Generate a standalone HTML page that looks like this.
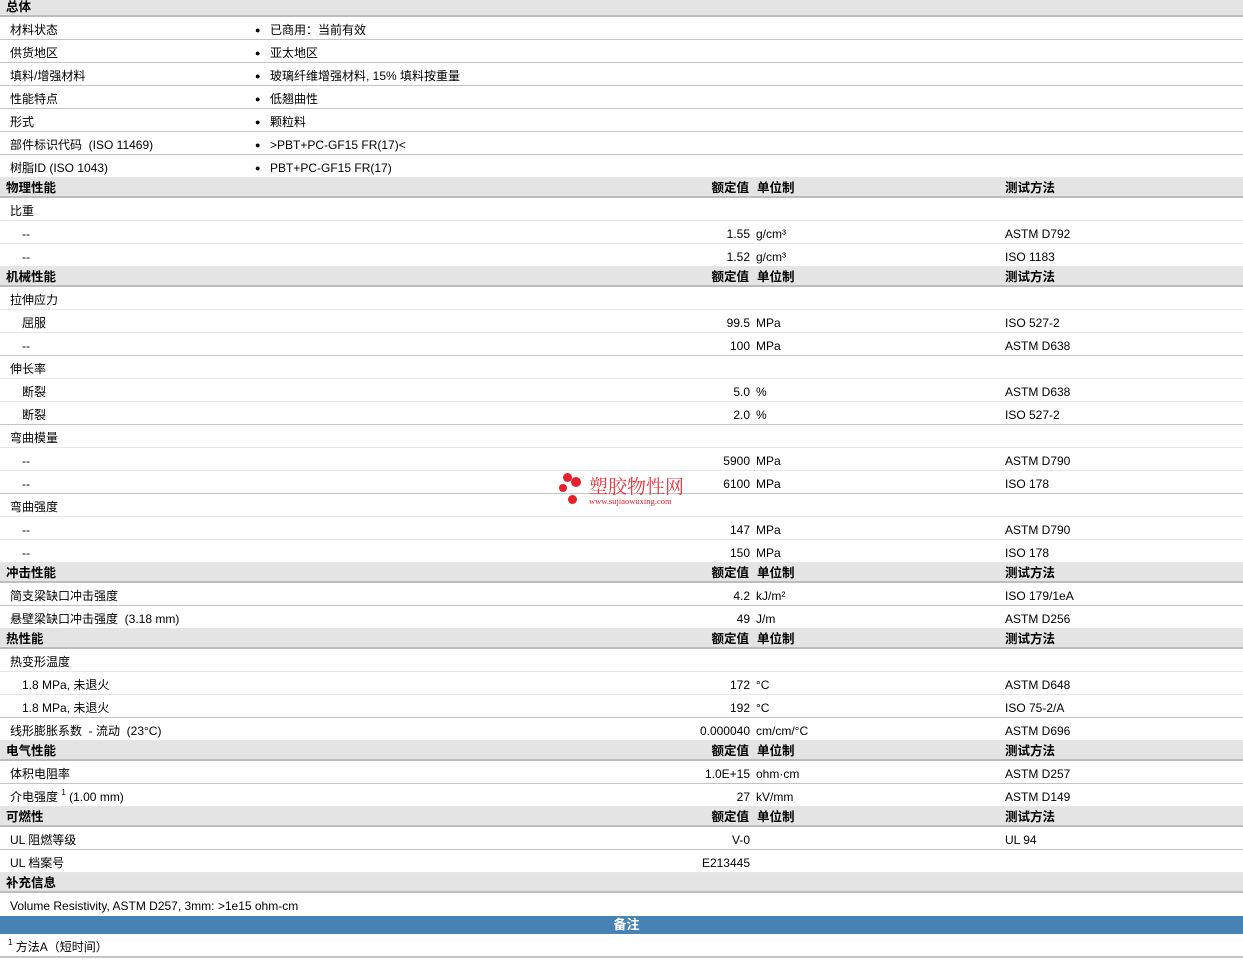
<!DOCTYPE html>
<html><head><meta charset="utf-8"><style>
*{margin:0;padding:0;box-sizing:border-box}
body{width:1243px;height:980px;background:#fff;position:relative;overflow:hidden;font-family:"Liberation Sans","Noto Sans CJK SC",sans-serif;font-size:12px;color:#000}
.r{position:absolute;left:0;width:1243px;height:23px;line-height:22px;border-bottom:1px solid #e6e6e6;white-space:nowrap}
.g{border-bottom:1px solid #c4c4c4}
.h{position:absolute;left:0;width:1243px;height:20px;line-height:19px;background:#e4e4e4;border-bottom:2px solid #bdbdbd;font-weight:bold;font-size:12.5px;white-space:nowrap}
.h span{position:absolute;top:1px}
.r span{position:absolute;top:2px}
.l{left:10px}.s{left:22px}.bl{left:255px;font-size:9px}.bv{left:270px}
.v{right:493px;text-align:right}
.u{left:756px}.t{left:1005px}
.hl{left:6px}
.hv{right:494px}.hu{left:757px}.ht{left:1005px}
sup{font-size:8px;vertical-align:top;line-height:14px}
</style></head><body>
<div class="h" style="top:0;height:17px;line-height:15px"><span class="hl" style="top:0">总体</span></div>
<div class="r g" style="top:17px"><span class="l">材料状态</span><span class="bl">●</span><span class="bv">已商用：当前有效</span></div>
<div class="r g" style="top:40px"><span class="l">供货地区</span><span class="bl">●</span><span class="bv">亚太地区</span></div>
<div class="r g" style="top:63px"><span class="l">填料/增强材料</span><span class="bl">●</span><span class="bv">玻璃纤维增强材料, 15% 填料按重量</span></div>
<div class="r g" style="top:86px"><span class="l">性能特点</span><span class="bl">●</span><span class="bv">低翘曲性</span></div>
<div class="r g" style="top:109px"><span class="l">形式</span><span class="bl">●</span><span class="bv">颗粒料</span></div>
<div class="r g" style="top:132px"><span class="l">部件标识代码 &nbsp;(ISO 11469)</span><span class="bl">●</span><span class="bv">&gt;PBT+PC-GF15 FR(17)&lt;</span></div>
<div class="r" style="top:155px"><span class="l">树脂ID (ISO 1043)</span><span class="bl">●</span><span class="bv">PBT+PC-GF15 FR(17)</span></div>

<div class="h" style="top:178px"><span class="hl">物理性能</span><span class="hv">额定值</span><span class="hu">单位制</span><span class="ht">测试方法</span></div>
<div class="r" style="top:198px"><span class="l">比重</span></div>
<div class="r" style="top:221px"><span class="s">--</span><span class="v">1.55</span><span class="u">g/cm³</span><span class="t">ASTM D792</span></div>
<div class="r" style="top:244px"><span class="s">--</span><span class="v">1.52</span><span class="u">g/cm³</span><span class="t">ISO 1183</span></div>

<div class="h" style="top:267px"><span class="hl">机械性能</span><span class="hv">额定值</span><span class="hu">单位制</span><span class="ht">测试方法</span></div>
<div class="r" style="top:287px"><span class="l">拉伸应力</span></div>
<div class="r" style="top:310px"><span class="s">屈服</span><span class="v">99.5</span><span class="u">MPa</span><span class="t">ISO 527-2</span></div>
<div class="r g" style="top:333px"><span class="s">--</span><span class="v">100</span><span class="u">MPa</span><span class="t">ASTM D638</span></div>
<div class="r" style="top:356px"><span class="l">伸长率</span></div>
<div class="r" style="top:379px"><span class="s">断裂</span><span class="v">5.0</span><span class="u">%</span><span class="t">ASTM D638</span></div>
<div class="r g" style="top:402px"><span class="s">断裂</span><span class="v">2.0</span><span class="u">%</span><span class="t">ISO 527-2</span></div>
<div class="r" style="top:425px"><span class="l">弯曲模量</span></div>
<div class="r" style="top:448px"><span class="s">--</span><span class="v">5900</span><span class="u">MPa</span><span class="t">ASTM D790</span></div>
<div class="r g" style="top:471px"><span class="s">--</span><span class="v">6100</span><span class="u">MPa</span><span class="t">ISO 178</span></div>
<div class="r" style="top:494px"><span class="l">弯曲强度</span></div>
<div class="r" style="top:517px"><span class="s">--</span><span class="v">147</span><span class="u">MPa</span><span class="t">ASTM D790</span></div>
<div class="r" style="top:540px"><span class="s">--</span><span class="v">150</span><span class="u">MPa</span><span class="t">ISO 178</span></div>

<div class="h" style="top:563px"><span class="hl">冲击性能</span><span class="hv">额定值</span><span class="hu">单位制</span><span class="ht">测试方法</span></div>
<div class="r g" style="top:583px"><span class="l">简支梁缺口冲击强度</span><span class="v">4.2</span><span class="u">kJ/m²</span><span class="t">ISO 179/1eA</span></div>
<div class="r" style="top:606px"><span class="l">悬壁梁缺口冲击强度 &nbsp;(3.18 mm)</span><span class="v">49</span><span class="u">J/m</span><span class="t">ASTM D256</span></div>

<div class="h" style="top:629px"><span class="hl">热性能</span><span class="hv">额定值</span><span class="hu">单位制</span><span class="ht">测试方法</span></div>
<div class="r" style="top:649px"><span class="l">热变形温度</span></div>
<div class="r" style="top:672px"><span class="s">1.8 MPa, 未退火</span><span class="v">172</span><span class="u">°C</span><span class="t">ASTM D648</span></div>
<div class="r g" style="top:695px"><span class="s">1.8 MPa, 未退火</span><span class="v">192</span><span class="u">°C</span><span class="t">ISO 75-2/A</span></div>
<div class="r" style="top:718px"><span class="l">线形膨胀系数 &nbsp;- 流动 &nbsp;(23°C)</span><span class="v">0.000040</span><span class="u">cm/cm/°C</span><span class="t">ASTM D696</span></div>

<div class="h" style="top:741px"><span class="hl">电气性能</span><span class="hv">额定值</span><span class="hu">单位制</span><span class="ht">测试方法</span></div>
<div class="r g" style="top:761px"><span class="l">体积电阻率</span><span class="v">1.0E+15</span><span class="u">ohm·cm</span><span class="t">ASTM D257</span></div>
<div class="r" style="top:784px"><span class="l">介电强度 <sup>1</sup> (1.00 mm)</span><span class="v">27</span><span class="u">kV/mm</span><span class="t">ASTM D149</span></div>

<div class="h" style="top:807px"><span class="hl">可燃性</span><span class="hv">额定值</span><span class="hu">单位制</span><span class="ht">测试方法</span></div>
<div class="r g" style="top:827px"><span class="l">UL 阻燃等级</span><span class="v">V-0</span><span class="t">UL 94</span></div>
<div class="r" style="top:850px"><span class="l">UL 档案号</span><span class="v">E213445</span></div>

<div class="h" style="top:873px"><span class="hl">补充信息</span></div>
<div class="r" style="top:893px;border-bottom:none"><span class="l">Volume Resistivity, ASTM D257, 3mm: &gt;1e15 ohm-cm</span></div>
<div style="position:absolute;top:916px;left:0;width:1243px;height:18px;background:#4682b4;color:#fff;font-weight:bold;font-size:13px;line-height:18px;text-align:center;padding-left:10px">备注</div>
<div class="r g" style="top:934px;border-bottom:2px solid #c4c4c4;height:24px"><span class="l" style="left:8px"><sup>1</sup> 方法A（短时间）</span></div>

<div style="position:absolute;left:563px;top:473px;width:9px;height:9px;border-radius:50%;background:#e8202a"></div>
<div style="position:absolute;left:571px;top:477px;width:10px;height:10px;border-radius:50%;background:#e8202a"></div>
<div style="position:absolute;left:559px;top:484px;width:8px;height:8px;border-radius:50%;background:#e8202a"></div>
<div style="position:absolute;left:568px;top:495px;width:9px;height:9px;border-radius:50%;background:#e8202a"></div>
<div style="position:absolute;left:589px;top:475px;color:#e8202a;font-size:19px;line-height:21px;font-family:'Noto Serif CJK SC','Noto Sans CJK SC',serif;opacity:.9">塑胶物性网</div>
<div style="position:absolute;left:589px;top:496px;color:#e8202a;font-size:8.5px;line-height:10px;font-family:'Liberation Serif',serif">www.sujiaowuxing.com</div>
</body></html>
